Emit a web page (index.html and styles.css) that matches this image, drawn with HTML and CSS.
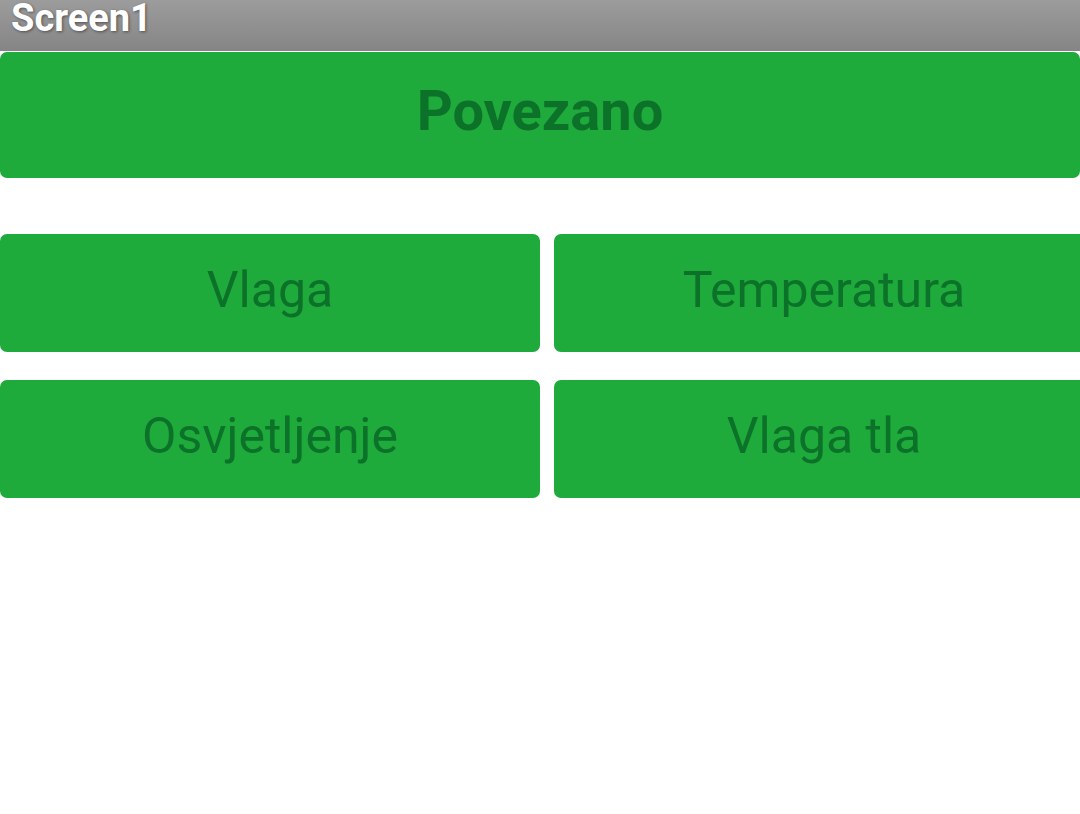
FILE: index.html
```html
<!DOCTYPE html>
<html>
<head>
<meta charset="utf-8">
<link rel="stylesheet" href="styles.css">
</head>
<body>
<div class="app">
  <header class="titlebar"><span class="title">Screen1</span></header>
  <div class="status">Povezano</div>
  <div class="grid">
    <div class="btn">Vlaga</div>
    <div class="btn">Temperatura</div>
    <div class="btn">Osvjetljenje</div>
    <div class="btn">Vlaga tla</div>
  </div>
</div>
</body>
</html>
```
FILE: styles.css
```css
html, body {
  margin: 0;
  padding: 0;
  background: #ffffff;
  width: 1080px;
  height: 814px;
  overflow: hidden;
  font-family: Roboto, "Liberation Sans", sans-serif;
}
.app {
  display: flex;
  flex-direction: column;
  width: 1080px;
  overflow: hidden;
}
.titlebar {
  height: 51px;
  background: linear-gradient(#9c9c9c, #858585);
  display: flex;
  align-items: flex-start;
  padding-left: 11px;
  box-sizing: border-box;
}
.title {
  color: #ffffff;
  font-weight: 700;
  font-size: 38px;
  line-height: 37px;
  text-shadow: 1px 1px 3px rgba(0,0,0,0.45);
}
.status {
  margin-top: 1px;
  height: 126px;
  box-sizing: border-box;
  padding-bottom: 8px;
  background: #1faa3c;
  border-radius: 7px;
  display: flex;
  align-items: center;
  justify-content: center;
  color: #0d7229;
  font-weight: 700;
  font-size: 56px;
}
.grid {
  margin-top: 56px;
  display: grid;
  grid-template-columns: 540px 540px;
  grid-auto-rows: 118px;
  column-gap: 14px;
  row-gap: 28px;
}
.btn {
  background: #1faa3c;
  border-radius: 7px;
  display: flex;
  align-items: center;
  justify-content: center;
  box-sizing: border-box;
  padding-bottom: 6px;
  color: #0d7229;
  font-size: 50px;
}
```
